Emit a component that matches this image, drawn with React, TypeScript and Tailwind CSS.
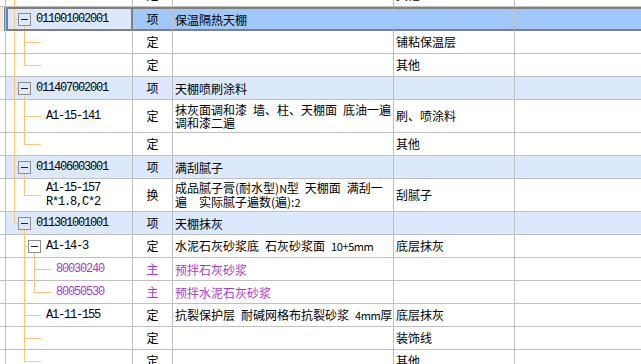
import clsx from 'clsx';

type V = 'full' | 'top' | 'low';

type Row = {
  tall?: boolean;
  sel?: boolean;
  item?: boolean;
  purple?: boolean;
  trunk?: 'full' | 'top';
  l1?: V;
  l2?: V;
  box?: 0 | 1;
  stub?: 1 | 2;
  code?: string[];
  type: string;
  name?: string[];
  spec?: string;
};

// en space (\u2002) keeps the half-width gaps of the original grid font
const rows: Row[] = [
  { trunk: 'full', type: '定', spec: '其他' },
  { sel: true, item: true, trunk: 'full', box: 0, l1: 'low', code: ['011001002001'], type: '项', name: ['保温隔热天棚'] },
  { trunk: 'full', l1: 'full', stub: 1, type: '定', spec: '铺粘保温层' },
  { trunk: 'full', l1: 'top', stub: 1, type: '定', spec: '其他' },
  { item: true, trunk: 'full', box: 0, l1: 'low', code: ['011407002001'], type: '项', name: ['天棚喷刷涂料'] },
  {
    tall: true, trunk: 'full', l1: 'full', stub: 1, code: ['A1-15-141'], type: '定',
    name: ['抹灰面调和漆\u2002墙、柱、天棚面\u2002底油一遍', '调和漆二遍'], spec: '刷、喷涂料',
  },
  { trunk: 'full', l1: 'top', stub: 1, type: '定', spec: '其他' },
  { item: true, trunk: 'full', box: 0, l1: 'low', code: ['011406003001'], type: '项', name: ['满刮腻子'] },
  {
    tall: true, trunk: 'full', l1: 'top', stub: 1, code: ['A1-15-157', 'R*1.8,C*2'], type: '换',
    name: ['成品腻子膏(耐水型)N型\u2002天棚面\u2002满刮一', '遍\u3000实际腻子遍数(遍):2'], spec: '刮腻子',
  },
  { item: true, trunk: 'top', box: 0, l1: 'low', code: ['011301001001'], type: '项', name: ['天棚抹灰'] },
  { l1: 'full', box: 1, l2: 'low', code: ['A1-14-3'], type: '定', name: ['水泥石灰砂浆底\u2002石灰砂浆面\u200210+5mm'], spec: '底层抹灰' },
  { purple: true, l1: 'full', l2: 'full', stub: 2, code: ['80030240'], type: '主', name: ['预拌石灰砂浆'] },
  { purple: true, l1: 'full', l2: 'top', stub: 2, code: ['80050530'], type: '主', name: ['预拌水泥石灰砂浆'] },
  { l1: 'full', stub: 1, code: ['A1-11-155'], type: '定', name: ['抗裂保护层\u2002耐碱网格布抗裂砂浆\u20024mm厚'], spec: '底层抹灰' },
  { l1: 'full', stub: 1, type: '定', spec: '装饰线' },
  { l1: 'top', stub: 1, type: '定', spec: '其他' },
];

const LINE = '#ffc878';

// latin runs are set smaller, like the bitmap grid font
function Mixed({ text }: { text: string }) {
  const parts = text.split(/([0-9A-Za-z+]+)/);
  return (
    <>
      {parts.map((p, i) =>
        i % 2 === 1 ? (
          <span key={i} className="text-[11px] tracking-[-0.4px]">
            {p}
          </span>
        ) : (
          p
        ),
      )}
    </>
  );
}

// tree connectors + expand box, drawn over the tree cell
function TreeLines({ r }: { r: Row }) {
  const h = r.sel ? 20 : r.tall ? 32 : 22;
  const H = r.sel ? h : h + 1; // run over the grid line below
  const m = h / 2;

  const vert = (v: V | undefined, x: number) => {
    if (!v) return null;
    const y1 = v === 'low' ? m + 7 : 0;
    const y2 = v === 'top' ? m + 1 : H;
    return <line x1={x + 0.5} x2={x + 0.5} y1={y1} y2={y2} stroke={LINE} />;
  };
  const horiz = (x1: number, x2: number) => (
    <line x1={x1} x2={x2} y1={m + 0.5} y2={m + 0.5} stroke={LINE} />
  );
  const box = (bx: number) => (
    <g>
      <rect x={bx + 0.5} y={m - 6 + 0.5} width={12} height={12} fill="none" stroke="#8c8c8c" />
      <line x1={bx + 3} x2={bx + 10} y1={m + 0.5} y2={m + 0.5} stroke="#222" />
    </g>
  );

  return (
    <svg
      width={127}
      height={H}
      shapeRendering="crispEdges"
      className={clsx('pointer-events-none absolute top-0', r.sel ? '-left-[2px]' : 'left-0')}
    >
      {vert(r.trunk, 8)}
      {vert(r.l1, 18)}
      {vert(r.l2, 28)}
      {r.box === 0 && horiz(9, 12)}
      {r.box === 1 && horiz(19, 22)}
      {r.stub === 1 && horiz(19, 35)}
      {r.stub === 2 && horiz(29, 45)}
      {r.box === 0 && box(12)}
      {r.box === 1 && box(22)}
    </svg>
  );
}

function TreeCell({ r }: { r: Row }) {
  const indent =
    r.sel ? 'pl-[28px]'
      : r.box === 0 ? 'pl-[30px]'
        : r.stub === 2 ? 'pl-[50px]'
          : 'pl-[40px]';
  return (
    <div
      className={clsx(
        'relative flex items-center',
        r.sel ? 'border-2 border-[#808080]' : 'border-r border-[#c0c0c0]',
        r.item ? 'bg-[#dce8fc]' : 'bg-white',
      )}
    >
      <TreeLines r={r} />
      {r.code && (
        <div
          className={clsx(
            "relative font-['Liberation_Mono',monospace] text-[12px] leading-[14px] tracking-[-1.2px]",
            indent,
            r.purple ? 'text-[#a83ac8]' : 'text-black',
          )}
        >
          {r.code.map((c) => (
            <div key={c} className="whitespace-nowrap">
              {c}
            </div>
          ))}
        </div>
      )}
    </div>
  );
}

function GridRow({ r }: { r: Row }) {
  const cell = clsx(
    'flex items-center border-r border-[#c0c0c0]',
    r.sel && 'border-y-2 border-y-[#808080]',
  );
  const bg = r.sel ? 'bg-[#a0c8fa]' : r.item ? 'bg-[#dce8fc]' : 'bg-white';
  const color = r.purple ? 'text-[#a83ac8]' : 'text-black';
  return (
    <div
      className={clsx(
        'grid grid-cols-[6px_127px_40px_221px_121px_1fr]',
        r.sel ? 'h-[24px]' : 'border-b border-[#c0c0c0]',
        !r.sel && (r.tall ? 'h-[33px]' : 'h-[23px]'),
      )}
    >
      <div className={clsx('flex justify-end border-r border-[#c0c0c0]', r.sel ? 'bg-[#fde7cf]' : 'bg-white')}>
        {r.sel && <span className="w-px bg-[#4a90e2]" />}
      </div>
      <TreeCell r={r} />
      <div className={clsx(cell, bg, color, 'justify-center')}>{r.type}</div>
      <div className={clsx(cell, bg, color, 'pl-[2px]')}>
        {r.name && (
          <div className="leading-[13px]">
            {r.name.map((n) => (
              <div key={n} className="whitespace-pre">
                <Mixed text={n} />
              </div>
            ))}
          </div>
        )}
      </div>
      <div className={clsx(cell, bg, 'pl-[2px] text-black')}>{r.spec}</div>
      <div className={clsx(cell, bg, 'border-r-0')} />
    </div>
  );
}

export default function App() {
  return (
    <div className="h-[364px] w-[641px] overflow-hidden bg-white font-['Noto_Sans_CJK_SC',sans-serif] text-[12px]">
      <div className="-mt-[16px]">
        {rows.map((r, i) => (
          <GridRow key={i} r={r} />
        ))}
      </div>
    </div>
  );
}
